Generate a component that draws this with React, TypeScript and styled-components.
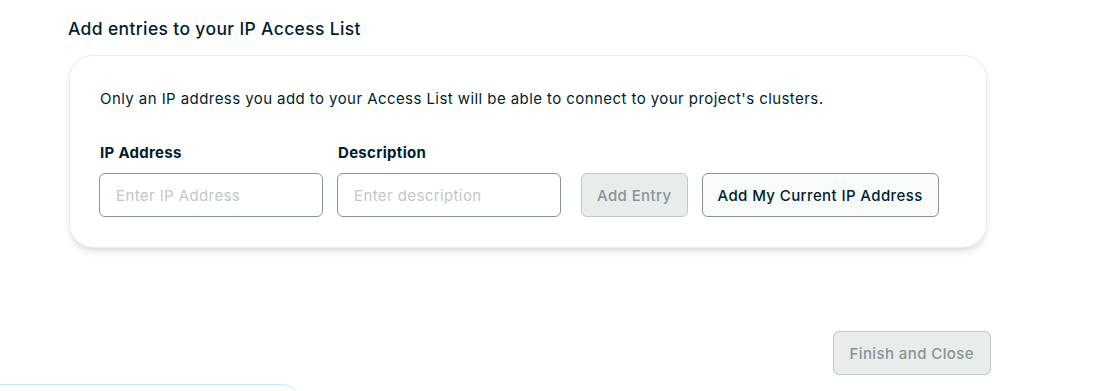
import styled, { createGlobalStyle } from "styled-components";

const GlobalStyle = createGlobalStyle`
  body {
    margin: 0;
    background: #ffffff;
    font-family: "Inter", "Lato", "Liberation Sans", sans-serif;
    color: #001e2b;
    overflow: hidden;
  }
`;

const Page = styled.div`
  position: relative;
  width: 1095px;
  height: 391px;
  overflow: hidden;
  padding: 18px 0 0 68px;
  box-sizing: border-box;
`;

const Section = styled.div`
  width: 922px;
  display: flex;
  flex-direction: column;
`;

const Heading = styled.h2`
  margin: 0 0 15px;
  font-size: 17.5px;
  font-weight: 500;
  line-height: 22px;
  letter-spacing: 0.35px;
  color: #001e2b;
`;

const Card = styled.div`
  margin-left: 1px;
  width: 918px;
  height: 193px;
  box-sizing: border-box;
  border: 1px solid #e8edeb;
  border-radius: 24px;
  background: #ffffff;
  box-shadow: 0 4px 10px -4px rgba(0, 30, 43, 0.3);
  padding: 33px 30px 0 29px;
`;

const Intro = styled.p`
  margin: 0 0 34px 1px;
  font-size: 15px;
  line-height: 20px;
  letter-spacing: 0.43px;
  color: #001e2b;
`;

const FormRow = styled.div`
  display: flex;
  align-items: flex-end;
`;

const Field = styled.label`
  display: flex;
  flex-direction: column;
  gap: 10px;
  margin-right: 14px;
`;

const Label = styled.span`
  padding-left: 1px;
  font-size: 15px;
  font-weight: 700;
  line-height: 20px;
  letter-spacing: 0.3px;
  color: #001e2b;
`;

const Input = styled.input`
  width: 224px;
  height: 44px;
  box-sizing: border-box;
  border: 1px solid #889397;
  border-radius: 6px;
  padding: 0 16px;
  font-family: inherit;
  font-size: 15px;
  letter-spacing: 0.4px;
  color: #001e2b;
  background: #ffffff;
  outline: none;

  &::placeholder {
    color: #c1c7c6;
  }
`;

const Button = styled.button<{ $disabled?: boolean; $wide?: boolean }>`
  height: 44px;
  box-sizing: border-box;
  padding: 0 ${({ $wide }) => ($wide ? "16px" : "15px")};
  border-radius: 6px;
  font-family: inherit;
  font-size: 15px;
  font-weight: 500;
  letter-spacing: 0.4px;
  border: 1px solid ${({ $disabled }) => ($disabled ? "#c1c7c6" : "#889397")};
  background: ${({ $disabled }) => ($disabled ? "#e8edeb" : "#f9fbfa")};
  color: ${({ $disabled }) => ($disabled ? "#889397" : "#001e2b")};
  cursor: ${({ $disabled }) => ($disabled ? "not-allowed" : "pointer")};
`;

const Actions = styled.div`
  display: flex;
  gap: 14px;
  margin-left: 6px;
`;

const Footer = styled.div`
  display: flex;
  justify-content: flex-end;
  margin-top: 83px;
  margin-right: -1px;
`;

const PeekingPanel = styled.div`
  position: absolute;
  left: -20px;
  top: 384px;
  width: 317px;
  height: 60px;
  border: 1px solid #c3e7fe;
  border-radius: 16px;
  background: #ffffff;
`;

export default function App() {
  return (
    <Page>
      <GlobalStyle />
      <Section>
        <Heading>Add entries to your IP Access List</Heading>
        <Card>
          <Intro>
            Only an IP address you add to your Access List will be able to
            connect to your project's clusters.
          </Intro>
          <FormRow>
            <Field>
              <Label>IP Address</Label>
              <Input placeholder="Enter IP Address" />
            </Field>
            <Field>
              <Label>Description</Label>
              <Input placeholder="Enter description" />
            </Field>
            <Actions>
              <Button $disabled disabled>
                Add Entry
              </Button>
              <Button>Add My Current IP Address</Button>
            </Actions>
          </FormRow>
        </Card>
        <Footer>
          <Button $disabled $wide disabled>
            Finish and Close
          </Button>
        </Footer>
      </Section>
      <PeekingPanel />
    </Page>
  );
}
